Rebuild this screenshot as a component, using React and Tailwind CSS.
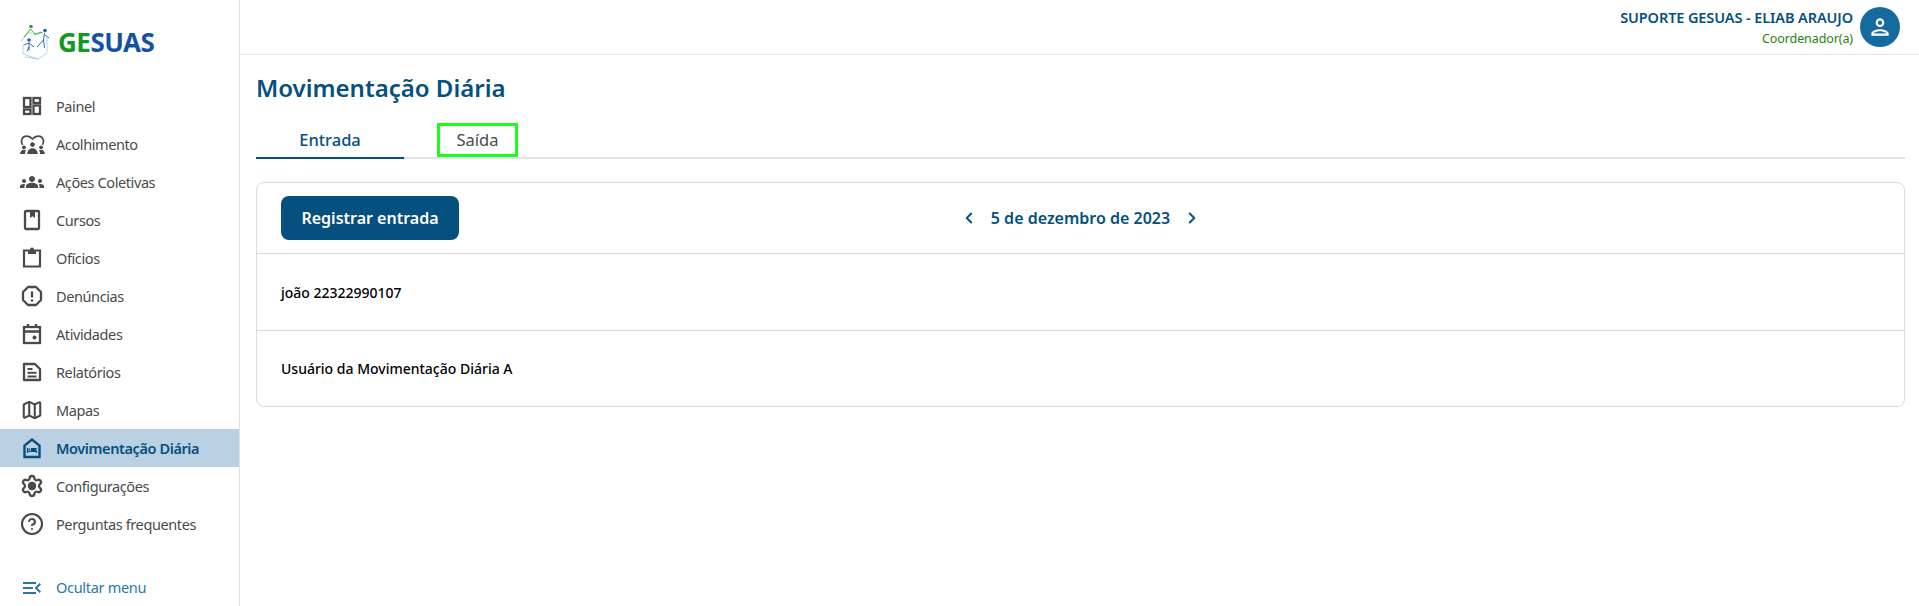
import { MdGroups, MdOutlineMenuOpen, MdOutlinePerson } from "react-icons/md";
import { ChevronLeft, ChevronRight, Settings, CircleHelp, Map as MapIcon } from "lucide-react";

function DashboardIcon({ className }) {
  return (
    <svg viewBox="0 0 24 24" className={className} fill="none" stroke="currentColor" strokeWidth="2.300">
      <rect x="4" y="4" width="6.500" height="9" />
      <rect x="13.500" y="4" width="6.500" height="5" />
      <rect x="4" y="15.500" width="6.500" height="4.500" />
      <rect x="13.500" y="11.500" width="6.500" height="8.500" />
    </svg>
  );
}

function WelcomeIcon({ className }) {
  return (
    <svg viewBox="0 0 26 20" className={className} fill="currentColor">
      <path d="M2.500 10.500C.5 6.500 1.500 2.500 5 1.500c3-.8 6 .4 8 2.700 2-2.300 5-3.500 8-2.700 3.500 1 4.500 5 2.500 9" fill="none" stroke="currentColor" strokeWidth="1.800" />
      <circle cx="13" cy="10" r="2.500" />
      <path d="M7.500 20c0-3.500 2.500-6 5.500-6s5.500 2.500 5.500 6z" />
      <circle cx="4" cy="13" r="2" />
      <path d="M0 20c0-2.500 1.800-4.500 4-4.500.8 0 1.500.2 2.100.6C5.400 17.200 5 18.500 5 20z" />
      <circle cx="22" cy="13" r="2" />
      <path d="M26 20c0-2.500-1.800-4.500-4-4.500-.8 0-1.500.2-2.100.6.700 1.100 1.100 2.400 1.100 3.900z" />
    </svg>
  );
}

function BookIcon({ className }) {
  return (
    <svg viewBox="0 0 24 24" className={className} fill="none" stroke="currentColor" strokeWidth="2.300">
      <rect x="5" y="3" width="14" height="18" rx="1" />
      <path d="M10 3h5v7l-2.500-1.800L10 10z" fill="currentColor" stroke="none" />
    </svg>
  );
}

function ClipboardIcon({ className }) {
  return (
    <svg viewBox="0 0 24 24" className={className} fill="none" stroke="currentColor" strokeWidth="2.200">
      <path d="M8 4.500H4v16h16v-16h-4" />
      <path d="M8 8V3.500h2a2 2 0 0 1 4 0h2V8z" fill="currentColor" stroke="none" />
    </svg>
  );
}

function ReportIcon({ className }) {
  return (
    <svg viewBox="0 0 24 24" className={className} fill="none" stroke="currentColor" strokeWidth="2.300">
      <path d="M8 3h8l5 5v8l-5 5H8l-5-5V8z" strokeLinejoin="round" />
      <path d="M12 7.500v6" />
      <circle cx="12" cy="16.500" r="1.300" fill="currentColor" stroke="none" />
    </svg>
  );
}

function EventIcon({ className }) {
  return (
    <svg viewBox="0 0 24 24" className={className} fill="none" stroke="currentColor" strokeWidth="2.300">
      <rect x="4" y="5" width="16" height="16" />
      <path d="M4 9.500h16M8 2v4M16 2v4" />
      <circle cx="14.500" cy="15.500" r="2" fill="currentColor" stroke="none" />
    </svg>
  );
}

function FeedIcon({ className }) {
  return (
    <svg viewBox="0 0 24 24" className={className} fill="none" stroke="currentColor" strokeWidth="2.300">
      <path d="M4 4h11l5 5v11H4z" strokeLinejoin="round" />
      <path d="M7.500 9h5M7.500 12.800h9M7.500 16.500h9" strokeWidth="1.900" />
    </svg>
  );
}

function ShelterIcon({ className }) {
  return (
    <svg viewBox="0 0 24 24" className={className} fill="none" stroke="currentColor" strokeWidth="2.400">
      <path d="M4.500 21V9.500L12 3.500l7.500 6V21z" />
      <path d="M7.500 12v5M7.500 15.500h9v1.500" strokeWidth="1.200" />
      <rect x="11" y="12" width="5.500" height="3" fill="currentColor" stroke="none" />
      <rect x="8.500" y="12.500" width="1.800" height="2" fill="currentColor" stroke="none" />
    </svg>
  );
}

function GearIcon({ className }) {
  return (
    <Settings className={className} strokeWidth={2.3}>
      <circle cx="12" cy="12" r="3" fill="currentColor" />
    </Settings>
  );
}

function HelpIcon({ className }) {
  return <CircleHelp className={className} strokeWidth={2.1} />;
}

function MapsIcon({ className }) {
  return <MapIcon className={className} strokeWidth={2.3} />;
}

function Logo() {
  return (
    <div className="flex items-center shrink-0 h-[54px] mt-[15px] pl-[20px]">
      <svg viewBox="0 0 30 36" className="w-[30px] h-[36px]" fill="none">
        <path d="M1 17 9 8l6 3 9-3" stroke="#8fd08a" strokeWidth="0.800" />
        <circle cx="11" cy="2.500" r="1.800" fill="#2e9e3a" />
        <path d="M10.500 5 4 13M10.500 5l4.500 5 7-2" stroke="#2e9e3a" strokeWidth="0.900" />
        <circle cx="25" cy="6.500" r="1.800" fill="#1b5fa8" />
        <path d="M24.500 9 23.500 16 17 23M25 11l4 3M23.500 16l1 8" stroke="#1b5fa8" strokeWidth="0.900" />
        <circle cx="9" cy="16" r="1.800" fill="#1b5fa8" />
        <path d="M9 18.500v8M3.500 21l5.500-2 5 4M9 23l-2 4" stroke="#1b5fa8" strokeWidth="0.900" />
        <path d="M3 30l15 5 9-6M5 33l13 2M27 13v15M3 21v9" stroke="#a6c4e6" strokeWidth="0.800" />
      </svg>
      <span className="ml-[8px] text-[26px] font-bold tracking-[-0.5px] leading-none">
        <span className="text-[#0f9a1f]">GE</span>
        <span className="text-[#1552a4]">SUAS</span>
      </span>
    </div>
  );
}

const menuItems = [
  { label: "Painel", icon: DashboardIcon, size: "w-[24px] h-[24px]" },
  { label: "Acolhimento", icon: WelcomeIcon, size: "w-[25px] h-[19px]" },
  { label: "Ações Coletivas", icon: MdGroups, size: "w-[24px] h-[24px]" },
  { label: "Cursos", icon: BookIcon, size: "w-[24px] h-[24px]" },
  { label: "Ofícios", icon: ClipboardIcon, size: "w-[24px] h-[24px]" },
  { label: "Denúncias", icon: ReportIcon, size: "w-[24px] h-[24px]" },
  { label: "Atividades", icon: EventIcon, size: "w-[24px] h-[24px]" },
  { label: "Relatórios", icon: FeedIcon, size: "w-[24px] h-[24px]" },
  { label: "Mapas", icon: MapsIcon, size: "w-[22px] h-[22px]" },
  { label: "Movimentação Diária", icon: ShelterIcon, size: "w-[24px] h-[24px]", active: true },
  { label: "Configurações", icon: GearIcon, size: "w-[24px] h-[24px]" },
  { label: "Perguntas frequentes", icon: HelpIcon, size: "w-[24px] h-[24px]" },
];

function Sidebar() {
  return (
    <aside className="w-[240px] shrink-0 border-r border-[#e2e2e2] flex flex-col overflow-hidden">
      <Logo />
      <nav className="mt-[18px] shrink-0">
        {menuItems.map((item) => {
          const Icon = item.icon;
          return (
            <div
              key={item.label}
              className={
                item.active
                  ? "h-[38px] flex items-center bg-[#bad1e4] text-[#05507e] font-semibold"
                  : "h-[38px] flex items-center text-[#4a4a4a]"
              }
            >
              <span className="w-[56px] flex justify-center pl-[8px] shrink-0">
                <Icon className={item.size} />
              </span>
              <span className="text-[14.500px] tracking-[-0.4px] pt-[2px]">{item.label}</span>
            </div>
          );
        })}
      </nav>
      <div className="mt-[26px] h-[38px] shrink-0 flex items-center text-[#2a78a8]">
        <span className="w-[56px] flex justify-center pl-[8px] shrink-0">
          <MdOutlineMenuOpen className="w-[24px] h-[24px]" />
        </span>
        <span className="text-[14.500px] tracking-[-0.3px]">Ocultar menu</span>
      </div>
    </aside>
  );
}

function Header() {
  return (
    <header className="h-[55px] border-b border-[#e2e2e2] flex items-center justify-end pr-[19px]">
      <div className="text-right mr-[7px]">
        <div className="text-[14.500px] font-semibold tracking-[-0.1px] text-[#05507e] leading-[20px]">SUPORTE GESUAS - ELIAB ARAUJO</div>
        <div className="text-[12.500px] tracking-[-0.1px] text-[#2e7d12] leading-[18px] mt-[3px]">Coordenador(a)</div>
      </div>
      <div className="w-[40px] h-[40px] rounded-full bg-[#156a9f] flex items-center justify-center text-white">
        <MdOutlinePerson className="w-[26px] h-[26px]" />
      </div>
    </header>
  );
}

function Tabs() {
  return (
    <div className="flex items-end h-[36px] mt-[19px] border-b-2 border-[#e0e4ea]">
      <div className="w-[148px] h-[36px] -mb-[2px] border-b-2 border-[#05507e] flex items-center justify-center text-[16.500px] font-medium text-[#05507e]">
        Entrada
      </div>
      <div className="ml-[33px] w-[81px] h-[34px] border-[3px] border-[#1aff1a] flex items-center justify-center text-[16.500px] text-[#4a4a4a]">
        Saída
      </div>
    </div>
  );
}

function Card() {
  return (
    <section className="mt-[23px] border border-[#dcdcdc] rounded-[8px]">
      <div className="h-[71px] flex items-center px-[24px] border-b border-[#dcdcdc]">
        <button className="w-[178px] h-[44px] rounded-[8px] bg-[#05507e] text-white text-[16px] font-semibold">
          Registrar entrada
        </button>
        <div className="flex-1 flex items-center justify-center pr-[178px] text-[#05507e]">
          <ChevronLeft className="w-[18px] h-[18px]" strokeWidth={2.5} />
          <span className="mx-[13px] text-[16px] font-semibold">5 de dezembro de 2023</span>
          <ChevronRight className="w-[18px] h-[18px]" strokeWidth={2.5} />
        </div>
      </div>
      <div className="h-[77px] flex items-center px-[24px] border-b border-[#dcdcdc] text-[14px] font-medium text-black">
        joão 22322990107
      </div>
      <div className="h-[75px] flex items-center px-[24px] text-[14px] font-medium text-black">
        Usuário da Movimentação Diária A
      </div>
    </section>
  );
}

export default function App() {
  return (
    <div className="flex w-[1919px] h-[606px] overflow-hidden bg-white font-['Noto_Sans',sans-serif]">
      <Sidebar />
      <div className="flex-1 flex flex-col min-w-0">
        <Header />
        <main className="pl-[16px] pr-[14px] pt-[17px]">
          <h1 className="text-[24px] font-semibold text-[#05507e] leading-[32px]">Movimentação Diária</h1>
          <Tabs />
          <Card />
        </main>
      </div>
    </div>
  );
}
